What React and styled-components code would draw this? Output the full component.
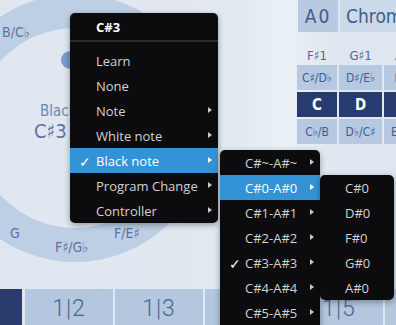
import styled, { createGlobalStyle } from 'styled-components';

const GlobalStyle = createGlobalStyle`
  html, body {
    margin: 0;
    padding: 0;
    background: #dde5ee;
  }
  * {
    box-sizing: border-box;
  }
`;

const Page = styled.div`
  position: relative;
  width: 396px;
  height: 325px;
  overflow: hidden;
  display: flex;
  flex-direction: column;
  background: linear-gradient(90deg, #dfe6ef 0%, #e2e9f1 60%, #eaf0f6 72%, #dfe6ef 85%);
  font-family: 'DejaVu Sans Condensed', 'DejaVu Sans', Roboto, sans-serif;
  font-stretch: condensed;
  color: #4d6794;
`;

const Top = styled.div`
  display: flex;
  height: 289px;
`;

const WheelPanel = styled.div`
  width: 297px;
  flex-shrink: 0;
`;

const RightPanel = styled.div`
  flex: 1;
  display: flex;
  flex-direction: column;
  min-width: 0;
`;

const HeaderRow = styled.div`
  display: flex;
  height: 32px;
  padding-left: 1px;
  gap: 2px;
`;

const HeaderBox = styled.div`
  display: flex;
  align-items: center;
  justify-content: ${(p) => (p.$center ? 'center' : 'flex-start')};
  width: ${(p) => (p.$w ? `${p.$w}px` : 'auto')};
  flex: ${(p) => (p.$w ? 'none' : '1')};
  padding-left: ${(p) => (p.$center ? '0' : '6px')};
  background: ${(p) => p.$bg};
  font-size: 19px;
  letter-spacing: ${(p) => (p.$center ? '2px' : '0')};
  color: #3f5e8d;
  white-space: nowrap;
  overflow: hidden;
`;

const Table = styled.div`
  display: grid;
  grid-template-columns: 40px 43px 43px;
  column-gap: 2px;
  margin-top: 16px;
  white-space: nowrap;
`;

const ColLabel = styled.div`
  height: 17px;
  text-align: center;
  font-size: 13px;
  color: #4d6794;
`;

const Cell = styled.div`
  height: 25px;
  margin-bottom: 2px;
  display: flex;
  align-items: center;
  justify-content: center;
  overflow: hidden;
  font-size: ${(p) => (p.$dark ? '15px' : '12px')};
  font-weight: ${(p) => (p.$dark ? 700 : 400)};
  background: ${(p) => (p.$dark ? '#283b70' : '#b6c9e1')};
  color: ${(p) => (p.$dark ? '#ffffff' : '#3f5e8d')};
`;

const TileRow = styled.div`
  display: flex;
  gap: 2px;
  height: 36px;
`;

const Tile = styled.div`
  width: ${(p) => p.$w}px;
  flex-shrink: 0;
  display: flex;
  justify-content: center;
  padding-top: 6px;
  margin-left: ${(p) => (p.$gap ? `${p.$gap}px` : '0')};
  background: ${(p) => (p.$dark ? '#2a3c6e' : '#b3c7df')};
  font-family: Roboto, 'DejaVu Sans Condensed', sans-serif;
  font-stretch: normal;
  font-size: 23px;
  font-weight: 300;
  letter-spacing: 1px;
  color: #4a6592;
`;

/* context menus lie over the page */
const Menu = styled.div`
  position: absolute;
  left: ${(p) => p.$x}px;
  top: ${(p) => p.$y}px;
  width: ${(p) => p.$w}px;
  background: #0c0c0e;
  border-radius: 5px;
  box-shadow: 0 2px 6px rgba(0, 0, 0, 0.35);
  font-family: 'Open Sans', 'Noto Sans', sans-serif;
  font-stretch: normal;
  font-size: 13px;
  color: #d2d2d2;
  overflow: hidden;
  padding-bottom: ${(p) => p.$pb || 0}px;
`;

const MenuTitle = styled.div`
  height: 29px;
  display: flex;
  align-items: center;
  padding-left: 26px;
  font-weight: 700;
  color: #ffffff;
  border-bottom: 2px solid #2c2c2e;
  margin-bottom: 6px;
`;

const Item = styled.div`
  position: relative;
  height: 25px;
  display: flex;
  align-items: center;
  padding-left: ${(p) => p.$pl}px;
  background: ${(p) => (p.$active ? '#3393d6' : 'transparent')};
  color: ${(p) => (p.$active ? '#ffffff' : '#d2d2d2')};
  white-space: nowrap;
`;

const Check = styled.span`
  position: absolute;
  left: ${(p) => p.$x}px;
  top: 4px;
  font-size: 14px;
  color: #ffffff;
`;

const Arrow = styled.span`
  position: absolute;
  right: ${(p) => p.$r}px;
  top: 9px;
  width: 0;
  height: 0;
  border-top: 3.5px solid transparent;
  border-bottom: 3.5px solid transparent;
  border-left: 4px solid ${(p) => (p.$active ? '#ffffff' : '#c8c8c8')};
`;

const Wheel = () => (
  <svg width="297" height="289" viewBox="0 0 297 289">
    <circle cx="75" cy="128" r="134" fill="#bdcfe4" />
    <circle cx="75" cy="128" r="100" fill="#e0e7f0" />
    <circle cx="70" cy="60" r="9" fill="#7b9cc5" />
    <g fill="#5a73a0" fontFamily="DejaVu Sans Condensed, DejaVu Sans, sans-serif" fontSize="14">
      <text x="2" y="37">B/C♭</text>
      <text x="10" y="238">G</text>
      <text x="55" y="252">F♯/G♭</text>
      <text x="114" y="238">F/E♯</text>
      <text x="40" y="116" fill="#6e86ad" fontSize="15">Black</text>
      <text x="34" y="138" fontSize="20">C♯3 -</text>
    </g>
  </svg>
);

const mainItems = ['Learn', 'None', 'Note', 'White note', 'Black note', 'Program Change', 'Controller'];
const subArrows = { Note: true, 'White note': true, 'Black note': true, 'Program Change': true, Controller: true };
const ranges = ['C#~-A#~', 'C#0-A#0', 'C#1-A#1', 'C#2-A#2', 'C#3-A#3', 'C#4-A#4', 'C#5-A#5'];
const notes = ['C#0', 'D#0', 'F#0', 'G#0', 'A#0'];

const App = () => {
  return (
    <Page>
      <GlobalStyle />
      <Top>
        <WheelPanel>
          <Wheel />
        </WheelPanel>
        <RightPanel>
          <HeaderRow>
            <HeaderBox $w={40} $center $bg="#b7cae1">A0</HeaderBox>
            <HeaderBox $bg="#cbd9ea">Chrom</HeaderBox>
          </HeaderRow>
          <Table>
            <ColLabel>F♯1</ColLabel>
            <ColLabel>G♯1</ColLabel>
            <ColLabel>A♯1</ColLabel>
            <Cell>C♯/D♭</Cell>
            <Cell>D♯/E♭</Cell>
            <Cell>E/F♭</Cell>
            <Cell $dark>C</Cell>
            <Cell $dark>D</Cell>
            <Cell $dark>E</Cell>
            <Cell>C♭/B</Cell>
            <Cell>D♭/C♯</Cell>
            <Cell>E♭/D♯</Cell>
          </Table>
        </RightPanel>
      </Top>
      <TileRow>
        <Tile $w={22} $dark />
        <Tile $w={88} $gap={1}>1|2</Tile>
        <Tile $w={88}>1|3</Tile>
        <Tile $w={88}>1|4</Tile>
        <Tile $w={88}>1|5</Tile>
        <Tile $w={88}>1|6</Tile>
      </TileRow>

      <Menu $x={70} $y={13} $w={148}>
        <MenuTitle>C#3</MenuTitle>
        {mainItems.map((label) => {
          const active = label === 'Black note';
          return (
            <Item key={label} $pl={26} $active={active}>
              {active && <Check $x={9}>✓</Check>}
              {label}
              {subArrows[label] && <Arrow $r={6} $active={active} />}
            </Item>
          );
        })}
      </Menu>

      <Menu $x={220} $y={150} $w={100} $pb={10}>
        {ranges.map((label) => {
          const active = label === 'C#0-A#0';
          return (
            <Item key={label} $pl={25} $active={active}>
              {label === 'C#3-A#3' && <Check $x={9}>✓</Check>}
              {label}
              <Arrow $r={6} $active={active} />
            </Item>
          );
        })}
      </Menu>

      <Menu $x={320} $y={175} $w={74} $pb={0}>
        {notes.map((label) => (
          <Item key={label} $pl={25}>
            {label}
          </Item>
        ))}
      </Menu>
    </Page>
  );
};

export default App;
